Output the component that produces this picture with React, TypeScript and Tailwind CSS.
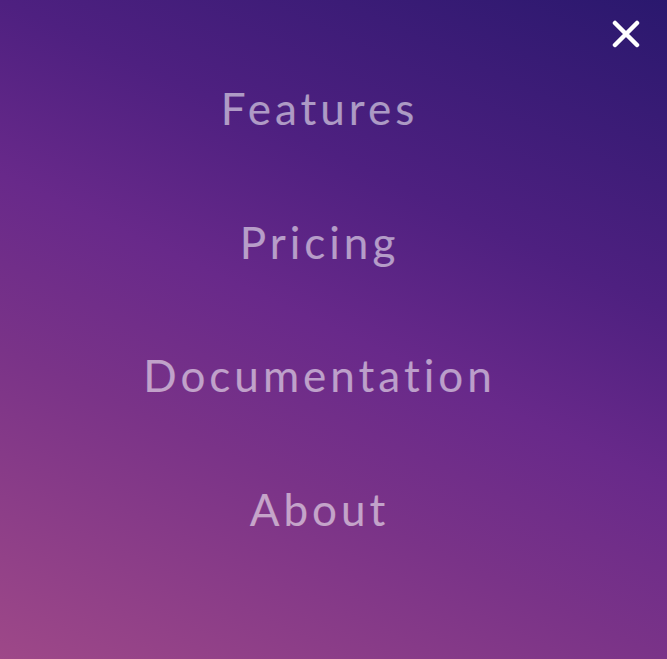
export default function App() {
  const items = ["Features", "Pricing", "Documentation", "About"];
  return (
    <div className="relative h-[659px] w-[667px] overflow-hidden bg-[linear-gradient(25deg,#9e4888_0%,#7a3388_32%,#68298a_50%,#4e2080_68%,#2a186e_100%)] font-['Lato',sans-serif]">
      <button className="absolute right-[27px] top-[20px] text-white">
        <svg width="28" height="28" viewBox="0 0 28 28" fill="none" stroke="currentColor" strokeWidth="4.5" strokeLinecap="round">
          <path d="M3 3L25 25M25 3L3 25" />
        </svg>
      </button>
      <nav className="flex flex-col items-center pr-[28px] pt-[75px]">
        {items.map((item) => (
          <a
            key={item}
            href="#"
            className="flex h-[133.7px] items-start text-[44px] leading-[66px] tracking-[4px] text-white/55 [font-variant-ligatures:none]"
          >
            {item}
          </a>
        ))}
      </nav>
    </div>
  );
}
